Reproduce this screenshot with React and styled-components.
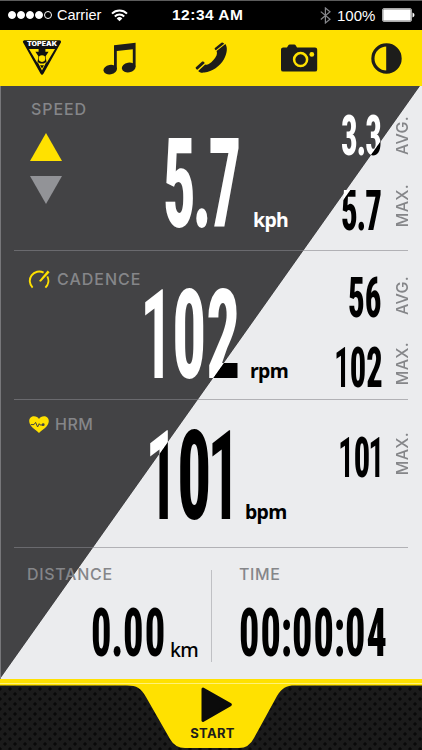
import React from "react";
import styled, { createGlobalStyle } from "styled-components";

const YELLOW = "#ffe100";
const DARK = "#434345";
const LIGHT = "#ebecee";
const INK = "#1d1d1b";
const SPLIT_W = 420;
const SPLIT_H = 593;

const Global = createGlobalStyle`
  *, *::before, *::after { box-sizing: border-box; }
  body { margin: 0; background: #000; }
  svg { display: block; }
`;

const Screen = styled.main`
  display: flex;
  flex-direction: column;
  width: 422px;
  height: 750px;
  overflow: hidden;
  font-family: Inter, "Liberation Sans", sans-serif;
`;

/* ---------- status bar ---------- */
const StatusBar = styled.div`
  display: grid;
  grid-template-columns: 49px 54px 61px 148px 17px 45px 34px;
  align-items: center;
  height: 30px;
  padding: 0 0 1px 8px;
  background: #000;
  border-top: 1px solid #5c5c5c;
  color: #fff;
  font-family: "Liberation Sans", Arial, sans-serif;
`;

const StatusText = styled.span`
  font-size: ${(p) => p.$size}px;
  font-weight: ${(p) => (p.$bold ? 700 : 400)};
  letter-spacing: ${(p) => p.$tracking || 0}px;
  white-space: nowrap;
`;

const Signal = styled.div`
  display: flex;
  gap: 1px;
`;

const Dot = styled.i`
  width: 8px;
  height: 8px;
  border-radius: 50%;
  border: 1px solid #fff;
  background: ${(p) => (p.$on ? "#fff" : "transparent")};
`;

/* ---------- navigation ---------- */
const NavBar = styled.nav`
  display: grid;
  grid-template-columns: 81px 92px 86px 90px 31px;
  align-items: center;
  height: 56px;
  padding-left: 22px;
  background: ${YELLOW};
`;

const NavButton = styled.button`
  display: block;
  padding: 0;
  border: 0;
  background: none;
`;

/* ---------- readings ---------- */
const Panel = styled.div`
  display: flex;
  flex-direction: column;
  height: 593px;
  padding: 0 14px;
  background: linear-gradient(to bottom right, ${DARK} calc(50% - 0.4px), ${LIGHT} calc(50% + 0.4px)) 0 0 /
    ${SPLIT_W}px ${SPLIT_H}px no-repeat ${LIGHT};
  box-shadow: inset 1px 0 #77777a;
`;

const Section = styled.section`
  display: grid;
  grid-template-columns: 129px 185px 80px;
  height: ${(p) => p.$h}px;
  border-bottom: 1px solid rgba(135, 135, 140, 0.58);
`;

const LabelCell = styled.div`
  padding: ${(p) => p.$top}px 0 0 ${(p) => p.$left}px;
`;

const Heading = styled.div`
  display: flex;
  align-items: center;
  gap: ${(p) => p.$gap || 0}px;
  height: 20px;
`;

const Label = styled.span`
  color: #858689;
  font-size: 16px;
  font-weight: 500;
  line-height: 20px;
  letter-spacing: ${(p) => p.$tracking || 0}px;
  white-space: nowrap;
`;

const Arrows = styled.div`
  display: flex;
  flex-direction: column;
  gap: 15px;
  margin: 14px 0 0 -1px;
`;

const ValueCell = styled.div`
  display: flex;
  align-items: flex-end;
  align-self: start;
  padding: ${(p) => p.$top}px 0 0 ${(p) => p.$left}px;
`;

const Unit = styled.span`
  margin-left: ${(p) => p.$gap}px;
  color: ${(p) => p.$color || "#000"};
  font-family: "Noto Sans", sans-serif;
  font-size: 19.5px;
  font-weight: ${(p) => p.$weight || 700};
  line-height: 20px;
  margin-bottom: -3px;
  letter-spacing: -0.7px;
`;

const SideCell = styled.div`
  display: flex;
  flex-direction: column;
  padding-top: ${(p) => p.$top}px;
  gap: ${(p) => p.$gap || 0}px;
`;

const SideRow = styled.div`
  display: grid;
  grid-template-columns: 66px 16px;
  height: 42px;
  align-items: center;
`;

const SideValue = styled.div`
  padding-left: ${(p) => p.$left}px;
`;

const SideLabel = styled.span`
  writing-mode: vertical-rl;
  transform: rotate(180deg);
  margin-bottom: ${(p) => p.$lift || 0}px;
  color: #858689;
  font-size: 16px;
  font-weight: 500;
  line-height: 16px;
  letter-spacing: 0.3px;
  white-space: nowrap;
`;

const NumberBox = styled.div`
  display: flow-root;
  flex: none;
  width: ${(p) => p.$w}px;
  height: ${(p) => p.$cap}px;
`;

/* Condensed numerals whose fill switches from white to black along the panel diagonal. */
const Numerals = styled.span`
  display: block;
  width: max-content;
  margin-top: -0.13em;
  padding-right: 6px;
  font-family: Roboto, sans-serif;
  font-stretch: 75%;
  font-weight: 800;
  font-size: ${(p) => p.$cap / 0.711}px;
  line-height: 1;
  letter-spacing: ${(p) => p.$tracking || 0}px;
  white-space: nowrap;
  transform: scaleX(${(p) => p.$sx});
  transform-origin: 0 0;
  color: ${(p) => (p.$split ? "transparent" : p.$white ? "#fff" : "#000")};
  ${(p) =>
    p.$split &&
    `
    background: linear-gradient(to bottom right, #fff calc(50% - 0.6px), #000 calc(50% + 0.6px)) no-repeat #000;
    background-size: ${SPLIT_W / p.$sx}px ${SPLIT_H}px;
    background-position: ${-p.$split[0] / p.$sx}px ${86 - p.$split[1] + (p.$cap / 0.711) * 0.13}px;
    background-clip: text;
    -webkit-background-clip: text;
  `}
`;

const Mark = styled.span`
  margin: 0 ${(p) => p.$pull}em;
`;

const One = styled.span`
  margin: 0 -0.02em 0 -0.06em;
  font-weight: 650;
`;

function Reading({ value, width, pull = -0.035, ...rest }) {
  return (
    <NumberBox $w={width} $cap={rest.$cap}>
      <Numerals {...rest}>
        {value.split(/([.:1])/).map((part, i) => {
          if (part === "1") return <One key={i}>1</One>;
          if (part === "." || part === ":")
            return (
              <Mark key={i} $pull={pull}>
                {part}
              </Mark>
            );
          return part;
        })}
      </Numerals>
    </NumberBox>
  );
}

/* ---------- totals ---------- */
const Totals = styled.section`
  display: grid;
  grid-template-columns: 197px 1fr;
  height: 131px;
  padding-top: 16px;
`;

const Total = styled.div`
  padding-left: ${(p) => p.$left}px;
  height: 92px;
  border-left: ${(p) => (p.$ruled ? "1px solid #bfc0c4" : "0")};
  margin-top: 6px;
`;

const TotalLabel = styled.div`
  height: 38px;
  margin-top: -6px;
`;

const TotalValue = styled.div`
  display: flex;
  align-items: flex-end;
  padding-left: ${(p) => p.$left || 0}px;
  padding-top: 8px;
`;

/* ---------- footer ---------- */
const Footer = styled.footer`
  height: 71px;
  background-color: #1b1b1b;
  background-image: radial-gradient(circle, #090909 1.3px, transparent 2px),
    radial-gradient(circle, #090909 1.3px, transparent 2px);
  background-size: 10px 10px;
  background-position: 0 0, 5px 5px;
`;

const StartButton = styled.button`
  display: flex;
  flex-direction: column;
  align-items: center;
  width: 422px;
  height: 71px;
  padding: 8px 0 0 3px;
  border: 0;
  background: linear-gradient(${YELLOW} 4.5px, #fff176 4.5px, #fff176 5.5px, ${YELLOW} 5.5px);
  clip-path: path(
    "M0 0H422V6.5H295C286 6.5 282 9 277 17L254 59Q249 69 239 69H185Q175 69 170 60L146 18C141 9 137 6.5 127 6.5H0Z"
  );
  color: ${INK};
  font-family: Inter, sans-serif;
`;

const StartText = styled.span`
  margin-top: 2px;
  font-size: 13px;
  font-weight: 700;
  line-height: 16px;
  letter-spacing: 0.3px;
`;

/* ---------- icons ---------- */
const WifiIcon = () => (
  <svg width="17" height="13" viewBox="0 0 17 13" fill="none" stroke="#fff" strokeWidth="2">
    <path d="M1 4.6a10.6 10.6 0 0 1 15 0" />
    <path d="M3.8 7.5a6.7 6.7 0 0 1 9.4 0" />
    <path d="M8.5 12.2 5.7 9.4a4 4 0 0 1 5.6 0Z" fill="#fff" stroke="none" />
  </svg>
);

const BluetoothIcon = () => (
  <svg width="11" height="17" viewBox="0 0 11 17" fill="none" stroke="#85868a" strokeWidth="1.2">
    <path d="M.8 4.6 10 12.3 5.4 16V1L10 4.8.8 12.5" />
  </svg>
);

const BatteryIcon = () => (
  <svg width="33" height="14" viewBox="0 0 33 14">
    <rect x=".5" y=".5" width="29" height="13" rx="1.5" fill="none" stroke="#aaa" />
    <rect x="1.2" y="1.2" width="27.6" height="11.6" rx=".6" fill="#fff" />
    <path d="M30.5 4.5q2 .6 2 2.5t-2 2.5Z" fill="#fff" />
  </svg>
);

const TopeakLogo = () => (
  <svg width="40" height="36" viewBox="0 0 40 36">
    <path d="M2.5 1.8h35L20 33Z" fill="#111" stroke="#111" strokeWidth="3.2" strokeLinejoin="round" />
    <path
      d="M7 9h9.6v2.8h-3.2l3 4.4-1 6.8ZM33 9h-9.6v2.8h3.2l-3 4.4 1 6.8Z"
      fill={YELLOW}
    />
    <path d="m15.6 22 2.6 1.6h3.6l2.6-1.6L20 30.6Z" fill={YELLOW} />
    <path d="M18 25.2h4l-2 3.2Z" fill="#111" />
    <circle cx="20" cy="18.6" r="3.3" fill={YELLOW} />
    <text
      x="20"
      y="6.4"
      textAnchor="middle"
      textLength="30"
      lengthAdjust="spacingAndGlyphs"
      fontFamily="Inter, sans-serif"
      fontWeight="900"
      fontSize="5.6"
      fill="#fff"
    >
      TOPEAK
    </text>
  </svg>
);

const MusicIcon = () => (
  <svg width="33" height="33" viewBox="0 0 33 33" fill={INK}>
    <path d="M11 3.2 32.6.8v24h-2.8V7.3L13.8 9v18H11Z" />
    <ellipse cx="7.2" cy="27.6" rx="6.8" ry="4.7" transform="rotate(-10 7.2 27.6)" />
    <ellipse cx="25.7" cy="25.5" rx="6.9" ry="4.8" transform="rotate(-10 25.7 25.5)" />
  </svg>
);

const PhoneIcon = () => (
  <svg width="33" height="33" viewBox="0 0 33 33" fill={INK}>
    <path d="M21.6 9 30.4 2C32.8 5.6 32.2 11.4 28.8 17.4 24.8 24 17.4 29.4 9.4 30.6 6.6 31 4.4 30.6 3.2 29L10.2 22.6Q12 23.2 13.8 22C17.4 19.6 20 16.8 21.6 13.2Q22.4 11 21.6 9Z" />
    <path d="M19.6 6.2 26.4.8q1.1-.8 2 .2L29.2 1.8 20.9 8.3Q19.6 7.6 19.6 6.2ZM.6 25.4 7.2 19.6q1.2-.6 2 .5L9.6 21.2 2.4 27.8Q.6 27.4.6 25.4Z" />
  </svg>
);

const CameraIcon = () => (
  <svg width="37" height="28" viewBox="0 0 37 28">
    <path
      d="M2.2 3.4H6L7.2 1.4Q7.7.6 8.8.6h4.4q1.1 0 1.6.8L16 3.4h18q2.2 0 2.2 2.2v19.8q0 2.2-2.2 2.2H2.2Q0 27.6 0 25.4V5.6Q0 3.4 2.2 3.4Z"
      fill={INK}
    />
    <circle cx="19.6" cy="15.6" r="6.5" fill="none" stroke={YELLOW} strokeWidth="2.5" />
    <circle cx="30.8" cy="10.4" r="2.4" fill={YELLOW} />
  </svg>
);

const ContrastIcon = () => (
  <svg width="31" height="31" viewBox="0 0 31 31">
    <circle cx="15.5" cy="15.5" r="13.6" fill="none" stroke={INK} strokeWidth="3.2" />
    <path d="M15.2 1h.3a14.5 14.5 0 0 1 0 29h-.3Z" fill={INK} />
  </svg>
);

const ArrowIcon = ({ down }) => (
  <svg width="32" height="28" viewBox="0 0 32 28">
    {down ? <path d="M0 0h32L16 28Z" fill="#929397" /> : <path d="M16 0l16 28H0Z" fill={YELLOW} />}
  </svg>
);

const GaugeIcon = () => (
  <svg width="22" height="19" viewBox="0 0 22 19" fill="none" stroke={YELLOW} strokeWidth="1.9">
    <path d="M4.6 17.6A9.4 9.4 0 0 1 15.6 2.6M19.3 6.4A9.4 9.4 0 0 1 17.4 17.6" />
    <path d="M19.6 .4 21.6 2.2 12.8 11.8 11 11Z" fill={YELLOW} stroke="none" />
  </svg>
);

const HeartIcon = () => (
  <svg width="20" height="17" viewBox="0 0 20 17">
    <path d="M10 17C7 13.8.2 10.4.2 5.2.2 2 2.5.3 5 .3 7.2.3 9 1.3 10 3 11 1.3 12.8.3 15 .3c2.5 0 4.8 1.7 4.8 4.9C19.8 10.4 13 13.8 10 17Z" fill={YELLOW} />
    <path d="M1.8 8.6H5l1.6-2.2 2 4.6 1.6-3.3 1 1.3H14" fill="none" stroke={DARK} strokeWidth="1" />
    <circle cx="14.2" cy="8.7" r="1.4" fill={DARK} />
  </svg>
);

const PlayGlyph = styled.svg`
  margin-left: 8px;
`;

const PlayIcon = () => (
  <PlayGlyph width="32" height="36" viewBox="0 0 32 36">
    <path d="M2 2 29.4 17.6 2 33.4Z" fill="#0b0b0b" stroke="#0b0b0b" strokeWidth="3" strokeLinejoin="round" />
  </PlayGlyph>
);

export default function App() {
  return (
    <Screen>
      <Global />
      <StatusBar>
        <Signal>
          {[1, 1, 1, 1, 0].map((on, i) => (
            <Dot key={i} $on={on} />
          ))}
        </Signal>
        <StatusText $size={14.5}>Carrier</StatusText>
        <WifiIcon />
        <StatusText $size={15.5} $bold $tracking={0.5}>12:34 AM</StatusText>
        <BluetoothIcon />
        <StatusText $size={15}>100%</StatusText>
        <BatteryIcon />
      </StatusBar>

      <NavBar>
        <NavButton aria-label="Home"><TopeakLogo /></NavButton>
        <NavButton aria-label="Music"><MusicIcon /></NavButton>
        <NavButton aria-label="Phone"><PhoneIcon /></NavButton>
        <NavButton aria-label="Camera"><CameraIcon /></NavButton>
        <NavButton aria-label="Contrast"><ContrastIcon /></NavButton>
      </NavBar>

      <Panel>
        <Section $h={165}>
          <LabelCell $top={13} $left={17}>
            <Heading><Label $tracking={0.9}>SPEED</Label></Heading>
            <Arrows>
              <ArrowIcon />
              <ArrowIcon down />
            </Arrows>
          </LabelCell>
          <ValueCell $top={53} $left={20}>
            <Reading value="5.7" width={76} $cap={88} $sx={0.52} pull={-0.05} $white />
            <Unit $gap={14} $color="#fff">kph</Unit>
          </ValueCell>
          <SideCell $top={29} $gap={27}>
            <SideRow>
              <SideValue $left={13}>
                <Reading value="3.3" width={44} $cap={39} $sx={0.6} $split={[341, 116.5]} />
              </SideValue>
              <SideLabel $lift={1}>AVG.</SideLabel>
            </SideRow>
            <SideRow>
              <SideValue $left={13}>
                <Reading value="5.7" width={44} $cap={39} $sx={0.6} $split={[341, 185.5]} />
              </SideValue>
              <SideLabel $lift={10}>MAX.</SideLabel>
            </SideRow>
          </SideCell>
        </Section>

        <Section $h={149}>
          <LabelCell $top={18} $left={14}>
            <Heading $gap={7}><GaugeIcon /><Label $tracking={1}>CADENCE</Label></Heading>
          </LabelCell>
          <ValueCell $top={39} $left={1}>
            <Reading value="102" width={92} $cap={88} $sx={0.54} $split={[144, 290]} />
            <Unit $gap={14}>rpm</Unit>
          </ValueCell>
          <SideCell $top={25} $gap={24}>
            <SideRow>
              <SideValue $left={20}>
                <Reading value="56" width={40} $cap={39} $sx={0.6} />
              </SideValue>
              <SideLabel $lift={4}>AVG.</SideLabel>
            </SideRow>
            <SideRow>
              <SideValue $left={8}>
                <Reading value="102" width={50} $cap={39} $sx={0.59} />
              </SideValue>
              <SideLabel $lift={8}>MAX.</SideLabel>
            </SideRow>
          </SideCell>
        </Section>

        <Section $h={148}>
          <LabelCell $top={14} $left={15}>
            <Heading $gap={6}><HeartIcon /><Label $tracking={0.5}>HRM</Label></Heading>
          </LabelCell>
          <ValueCell $top={31} $left={6}>
            <Reading value="101" width={82} $cap={88} $sx={0.54} $split={[149, 431]} />
            <Unit $gap={14}>bpm</Unit>
          </ValueCell>
          <SideCell $top={32}>
            <SideRow>
              <SideValue $left={12}>
                <Reading value="101" width={46} $cap={39} $sx={0.59} />
              </SideValue>
              <SideLabel $lift={8}>MAX.</SideLabel>
            </SideRow>
          </SideCell>
        </Section>

        <Totals>
          <Total $left={13}>
            <TotalLabel><Label $tracking={0.7}>DISTANCE</Label></TotalLabel>
            <TotalValue $left={64}>
              <Reading value="0.00" width={74} $cap={47} $sx={0.61} $tracking={2} />
              <Unit $gap={5} $weight={500}>km</Unit>
            </TotalValue>
          </Total>
          <Total $left={27} $ruled>
            <TotalLabel><Label $tracking={0.6}>TIME</Label></TotalLabel>
            <TotalValue>
              <Reading value="00:00:04" width={148} $cap={47} $sx={0.607} $tracking={2} />
            </TotalValue>
          </Total>
        </Totals>
      </Panel>

      <Footer>
        <StartButton>
          <PlayIcon />
          <StartText>START</StartText>
        </StartButton>
      </Footer>
    </Screen>
  );
}
